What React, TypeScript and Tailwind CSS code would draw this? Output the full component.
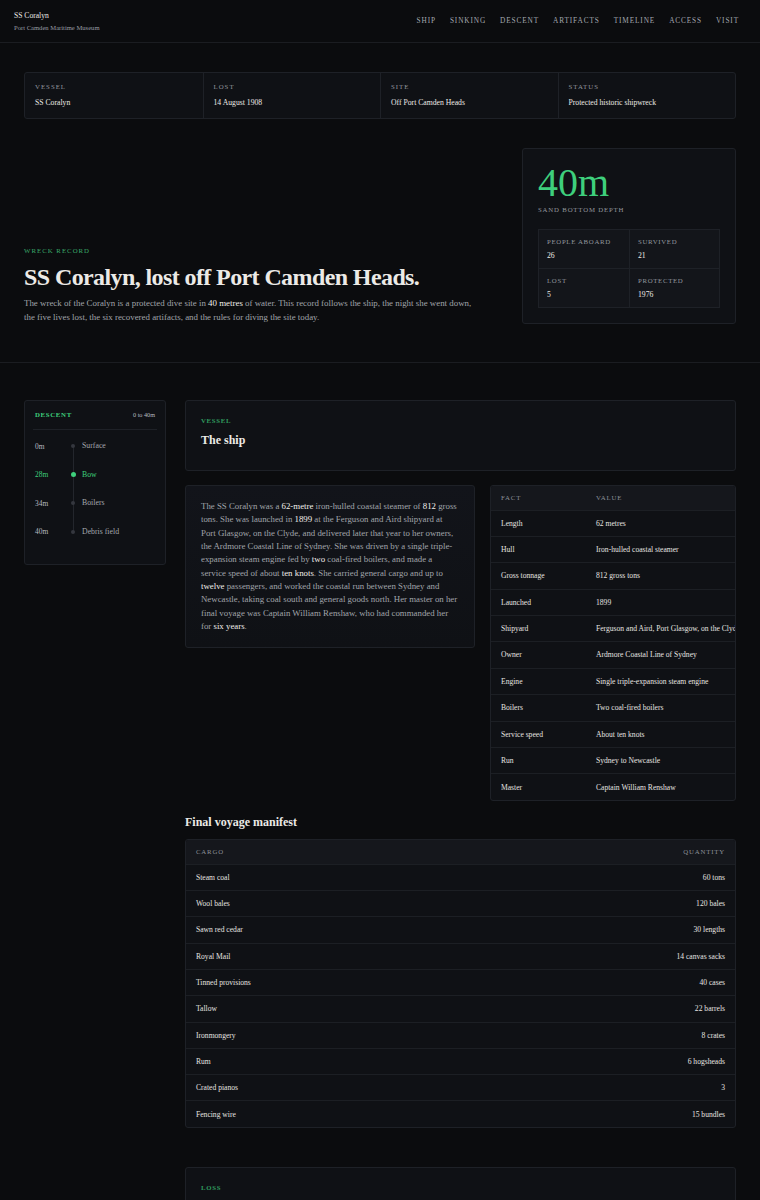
const navLinks = ['Ship', 'Sinking', 'Descent', 'Artifacts', 'Timeline', 'Access', 'Visit']

const summary = [
  { label: 'Vessel', value: 'SS Coralyn' },
  { label: 'Lost', value: '14 August 1908' },
  { label: 'Site', value: 'Off Port Camden Heads' },
  { label: 'Status', value: 'Protected historic shipwreck' },
]

const headcount = [
  { label: 'People aboard', value: '26' },
  { label: 'Survived', value: '21' },
  { label: 'Lost', value: '5' },
  { label: 'Protected', value: '1976' },
]

const descent = [
  { depth: '0m', name: 'Surface', active: false },
  { depth: '28m', name: 'Bow', active: true },
  { depth: '34m', name: 'Boilers', active: false },
  { depth: '40m', name: 'Debris field', active: false },
]

const shipFacts = [
  ['Length', '62 metres'],
  ['Hull', 'Iron-hulled coastal steamer'],
  ['Gross tonnage', '812 gross tons'],
  ['Launched', '1899'],
  ['Shipyard', 'Ferguson and Aird, Port Glasgow, on the Clyde'],
  ['Owner', 'Ardmore Coastal Line of Sydney'],
  ['Engine', 'Single triple-expansion steam engine'],
  ['Boilers', 'Two coal-fired boilers'],
  ['Service speed', 'About ten knots'],
  ['Run', 'Sydney to Newcastle'],
  ['Master', 'Captain William Renshaw'],
]

const manifest = [
  ['Steam coal', '60 tons'],
  ['Wool bales', '120 bales'],
  ['Sawn red cedar', '30 lengths'],
  ['Royal Mail', '14 canvas sacks'],
  ['Tinned provisions', '40 cases'],
  ['Tallow', '22 barrels'],
  ['Ironmongery', '8 crates'],
  ['Rum', '6 hogsheads'],
  ['Crated pianos', '3'],
  ['Fencing wire', '15 bundles'],
]

const Hl = ({ children }: { children: React.ReactNode }) => (
  <strong className="font-normal text-[#f0eee9]">{children}</strong>
)

const App = () => {
  return (
    <div className="min-h-[1200px] bg-[#0b0c0e] font-['Liberation_Serif','Times_New_Roman',serif] text-[#e6e4e0]">
      {/* top bar */}
      <header className="flex h-[43px] items-center justify-between border-b border-[#1b1d21] pl-[14px] pr-[21px]">
        <div>
          <div className="text-[7.6px] leading-[10px] text-[#eceae6]">SS Coralyn</div>
          <div className="mt-[3px] text-[6.6px] leading-[8px] text-[#9a9ea5]">Port Camden Maritime Museum</div>
        </div>
        <nav className="flex gap-[14px]">
          {navLinks.map((link) => (
            <a key={link} className="text-[7.3px] uppercase tracking-[0.12em] text-[#a4a8ae]">
              {link}
            </a>
          ))}
        </nav>
      </header>

      {/* hero */}
      <section className="border-b border-[#1b1d21] px-[24px] pt-[29px] pb-[38px]">
        <div className="grid grid-cols-4 rounded-[3px] border border-[#1e2127] bg-[#0f1115]">
          {summary.map((item, i) => (
            <div key={item.label} className={`px-[10px] pt-[9px] pb-[9px] ${i > 0 ? 'border-l border-[#1e2127]' : ''}`}>
              <div className="text-[6.8px] leading-[10px] uppercase tracking-[0.15em] text-[#92969d]">{item.label}</div>
              <div className="mt-[5px] text-[7.7px] leading-[12px] text-[#eceae6]">{item.value}</div>
            </div>
          ))}
        </div>

        <div className="mt-[29px] flex items-end justify-between">
          <div className="w-[460px]">
            <div className="text-[6.8px] leading-[10px] uppercase tracking-[0.15em] text-[#3aa96a]">Wreck record</div>
            <h1 className="mt-[8px] text-[24px] leading-[26.4px] font-bold tracking-[-0.025em] text-[#eceae6]">
              SS Coralyn, lost off Port Camden Heads.
            </h1>
            <p className="mt-[7px] text-[8.9px] leading-[13.33px] text-[#a0a4aa]">
              The wreck of the Coralyn is a protected dive site in <Hl>40 metres</Hl> of water. This record follows the
              ship, the night she went down, the five lives lost, the six recovered artifacts, and the rules for diving
              the site today.
            </p>
          </div>

          <div className="w-[214px] rounded-[3px] border border-[#1e2127] bg-[#0f1115] px-[15px] pt-[14px] pb-[15px]">
            <div className="text-[40px] leading-[40px] text-[#3ecf7c]">40m</div>
            <div className="mt-[2px] text-[6.8px] leading-[10px] uppercase tracking-[0.12em] text-[#92969d]">
              Sand bottom depth
            </div>
            <div className="mt-[14px] grid grid-cols-2 border border-[#1e2127] bg-[#13151a]">
              {headcount.map((item, i) => (
                <div
                  key={item.label}
                  className={`px-[8px] pt-[7px] pb-[6px] ${i % 2 === 1 ? 'border-l border-[#1e2127]' : ''} ${i > 1 ? 'border-t border-[#1e2127]' : ''}`}
                >
                  <div className="text-[6.8px] leading-[10px] uppercase tracking-[0.1em] text-[#92969d]">{item.label}</div>
                  <div className="mt-[3px] text-[7.7px] leading-[12px] text-[#eceae6]">{item.value}</div>
                </div>
              ))}
            </div>
          </div>
        </div>
      </section>

      {/* body */}
      <div className="grid grid-cols-[142px_1fr] items-start gap-[19px] px-[24px] pt-[37px]">
        <aside className="rounded-[3px] border border-[#1e2127] bg-[#0f1115]">
          <div className="mx-[8px] flex items-center justify-between border-b border-[#1e2127] px-[2px] pt-[9px] pb-[9px]">
            <span className="text-[6.8px] leading-[10px] font-bold uppercase tracking-[0.1em] text-[#3ecf7c]">Descent</span>
            <span className="text-[6.2px] leading-[10px] text-[#b8bbc0]">0 to 40m</span>
          </div>
          <ul className="px-[10px] pt-[2px] pb-[18px]">
            {descent.map((stop, i) => (
              <li key={stop.depth} className="flex h-[28.5px] items-center">
                <span className={`w-[34px] text-[7.4px] ${stop.active ? 'text-[#3ecf7c]' : 'text-[#b8bbc0]'}`}>{stop.depth}</span>
                <span className="relative flex h-full w-[8px] items-center justify-center">
                  <span
                    className={`absolute left-[3.5px] w-px bg-[#23262c] ${i === 0 ? 'top-1/2 bottom-0' : i === descent.length - 1 ? 'top-0 bottom-1/2' : 'top-0 bottom-0'}`}
                  />
                  <span
                    className={`relative rounded-full ${stop.active ? 'h-[5px] w-[5px] bg-[#3ecf7c]' : 'h-[4px] w-[4px] bg-[#34373e]'}`}
                  />
                </span>
                <span className={`ml-[5px] text-[7.8px] ${stop.active ? 'text-[#3ecf7c]' : 'text-[#a4a8ae]'}`}>{stop.name}</span>
              </li>
            ))}
          </ul>
        </aside>

        <main className="flex min-w-0 flex-col gap-[39px]">
          <section className="flex flex-col">
            <div className="rounded-[3px] border border-[#1e2127] bg-[#0f1115] px-[15px] pt-[15px] pb-[22px]">
              <div className="text-[6.8px] leading-[10px] font-bold uppercase tracking-[0.1em] text-[#2f9a5e]">Vessel</div>
              <h2 className="mt-[6px] text-[12px] leading-[16px] font-bold text-[#eceae6]">The ship</h2>
            </div>

            <div className="mt-[14px] grid grid-cols-[290px_1fr] items-start gap-[15px]">
              <div className="rounded-[3px] border border-[#1e2127] bg-gradient-to-b from-[#12141a] to-[#0f1115] px-[15px] py-[14px]">
                <p className="text-[8.82px] leading-[13.33px] text-[#a0a4aa]">
                  The SS Coralyn was a <Hl>62-metre</Hl> iron-hulled coastal steamer of <Hl>812</Hl> gross tons. She was
                  launched in <Hl>1899</Hl> at the Ferguson and Aird shipyard at Port Glasgow, on the Clyde, and
                  delivered later that year to her owners, the Ardmore Coastal Line of Sydney. She was driven by a single
                  triple-expansion steam engine fed by <Hl>two</Hl> coal-fired boilers, and made a service speed of about{' '}
                  <Hl>ten knots</Hl>. She carried general cargo and up to <Hl>twelve</Hl> passengers, and worked the
                  coastal run between Sydney and Newcastle, taking coal south and general goods north. Her master on her
                  final voyage was Captain William Renshaw, who had commanded her for <Hl>six years</Hl>.
                </p>
              </div>

              <div className="overflow-hidden rounded-[3px] border border-[#1e2127] bg-[#0f1115]">
                <table className="w-full table-fixed border-collapse whitespace-nowrap text-left">
                  <thead>
                    <tr className="h-[24px] bg-[#15171c]">
                      <th className="w-[95px] px-[10px] text-[6.8px] font-normal uppercase tracking-[0.12em] text-[#8c9098]">Fact</th>
                      <th className="px-[10px] text-[6.8px] font-normal uppercase tracking-[0.12em] text-[#8c9098]">Value</th>
                    </tr>
                  </thead>
                  <tbody>
                    {shipFacts.map(([fact, value]) => (
                      <tr key={fact} className="h-[26.4px] border-t border-[#1c1f24]">
                        <td className="px-[10px] text-[7.6px] text-[#e6e4e0]">{fact}</td>
                        <td className="px-[10px] text-[7.6px] text-[#e6e4e0]">{value}</td>
                      </tr>
                    ))}
                  </tbody>
                </table>
              </div>
            </div>

            <h3 className="mt-[13px] text-[12px] leading-[16px] font-bold text-[#eceae6]">Final voyage manifest</h3>
            <div className="mt-[9px] overflow-hidden rounded-[3px] border border-[#1e2127] bg-[#0f1115]">
              <table className="w-full border-collapse text-left">
                <thead>
                  <tr className="h-[24px] bg-[#15171c]">
                    <th className="px-[10px] text-[6.8px] font-normal uppercase tracking-[0.12em] text-[#8c9098]">Cargo</th>
                    <th className="px-[10px] text-right text-[6.8px] font-normal uppercase tracking-[0.12em] text-[#8c9098]">Quantity</th>
                  </tr>
                </thead>
                <tbody>
                  {manifest.map(([cargo, qty]) => (
                    <tr key={cargo} className="h-[26.3px] border-t border-[#1c1f24]">
                      <td className="px-[10px] text-[7.6px] text-[#e6e4e0]">{cargo}</td>
                      <td className="px-[10px] text-right text-[7.6px] text-[#e6e4e0]">{qty}</td>
                    </tr>
                  ))}
                </tbody>
              </table>
            </div>
          </section>

          <section className="h-[60px] rounded-[3px] border border-[#1e2127] bg-[#0f1115] px-[15px] pt-[15px]">
            <div className="text-[6.8px] leading-[10px] font-bold uppercase tracking-[0.1em] text-[#2f9a5e]">Loss</div>
          </section>
        </main>
      </div>
    </div>
  )
}

export default App
